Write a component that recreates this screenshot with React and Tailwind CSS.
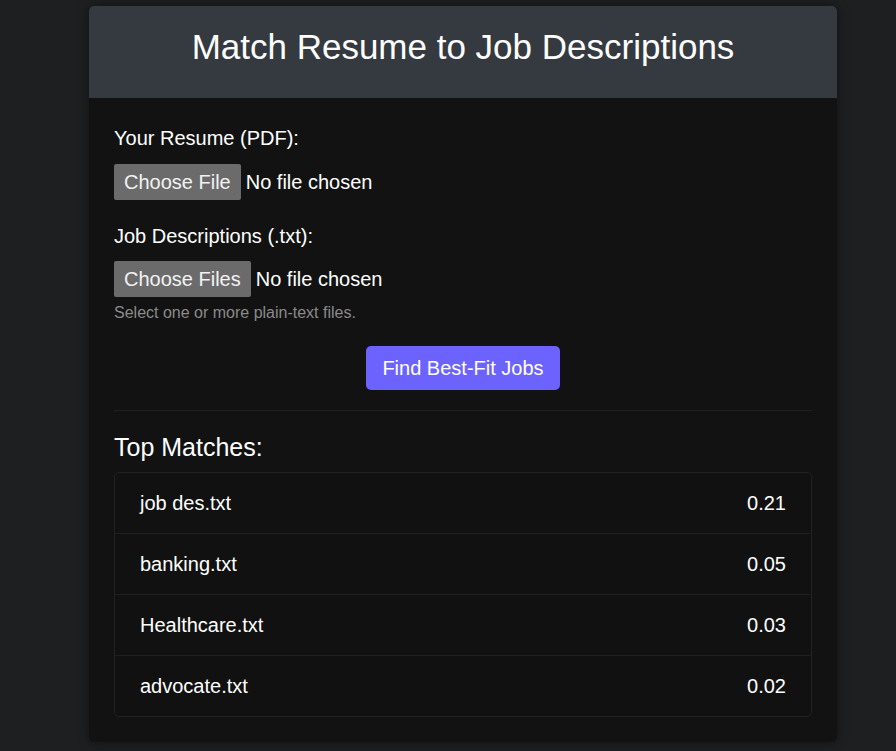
import React from "react";

const matches = [
  { name: "job des.txt", score: "0.21" },
  { name: "banking.txt", score: "0.05" },
  { name: "Healthcare.txt", score: "0.03" },
  { name: "advocate.txt", score: "0.02" },
];

const FilePicker = ({ label }) => (
  <div className="flex items-center h-[36px]">
    <span className="h-[36px] flex items-center px-[10px] bg-[#6b6b6b] text-[#f2f2f2] rounded-[2px]">
      {label}
    </span>
    <span className="ml-[5px] text-white">No file chosen</span>
  </div>
);

const App = () => {
  return (
    <div
      className="min-h-[751px] bg-[#1e1f21] pt-[6px] pb-[9px]"
      style={{ fontFamily: '"Liberation Sans", Arial, sans-serif' }}
    >
      <div className="ml-[89px] w-[748px] rounded-[5px] overflow-hidden bg-[#121212] shadow-[0_0_12px_rgba(0,0,0,0.45)]">
        {/* Header */}
        <div className="h-[92px] pb-[11px] bg-[#343a40] flex items-center justify-center">
          <h1 className="text-[35px] text-white leading-none">
            Match Resume to Job Descriptions
          </h1>
        </div>

        {/* Form */}
        <div className="px-[25px] pt-[25px] pb-[25px] text-[20px] text-white">
          <p className="leading-[30px]">Your Resume (PDF):</p>
          <div className="mt-[11px]">
            <FilePicker label="Choose File" />
          </div>

          <p className="leading-[30px] mt-[21px]">Job Descriptions (.txt):</p>
          <div className="mt-[10px]">
            <FilePicker label="Choose Files" />
          </div>
          <p className="mt-[4px] text-[16px] leading-[24px] text-[#8a8a8a]">
            Select one or more plain-text files.
          </p>

          <div className="flex justify-center mt-[21px]">
            <button className="h-[44px] px-[16px] bg-[#6c63ff] text-white rounded-[5px] text-[20px]">
              Find Best-Fit Jobs
            </button>
          </div>

          <div className="mt-[20px] border-t border-[#1f1f1f]" />

          <h2 className="mt-[18px] text-[25px] leading-[36px]">Top Matches:</h2>

          <div className="mt-[7px] border border-[#222222] rounded-[5px] bg-[#111111]">
            {matches.map((m, i) => (
              <div
                key={m.name}
                className={
                  "flex items-center justify-between px-[25px] " +
                  (i < matches.length - 1 ? "h-[61px] border-b border-[#1f1f1f]" : "h-[60px]")
                }
              >
                <span>{m.name}</span>
                <span>{m.score}</span>
              </div>
            ))}
          </div>
        </div>
      </div>
    </div>
  );
};

export default App;
